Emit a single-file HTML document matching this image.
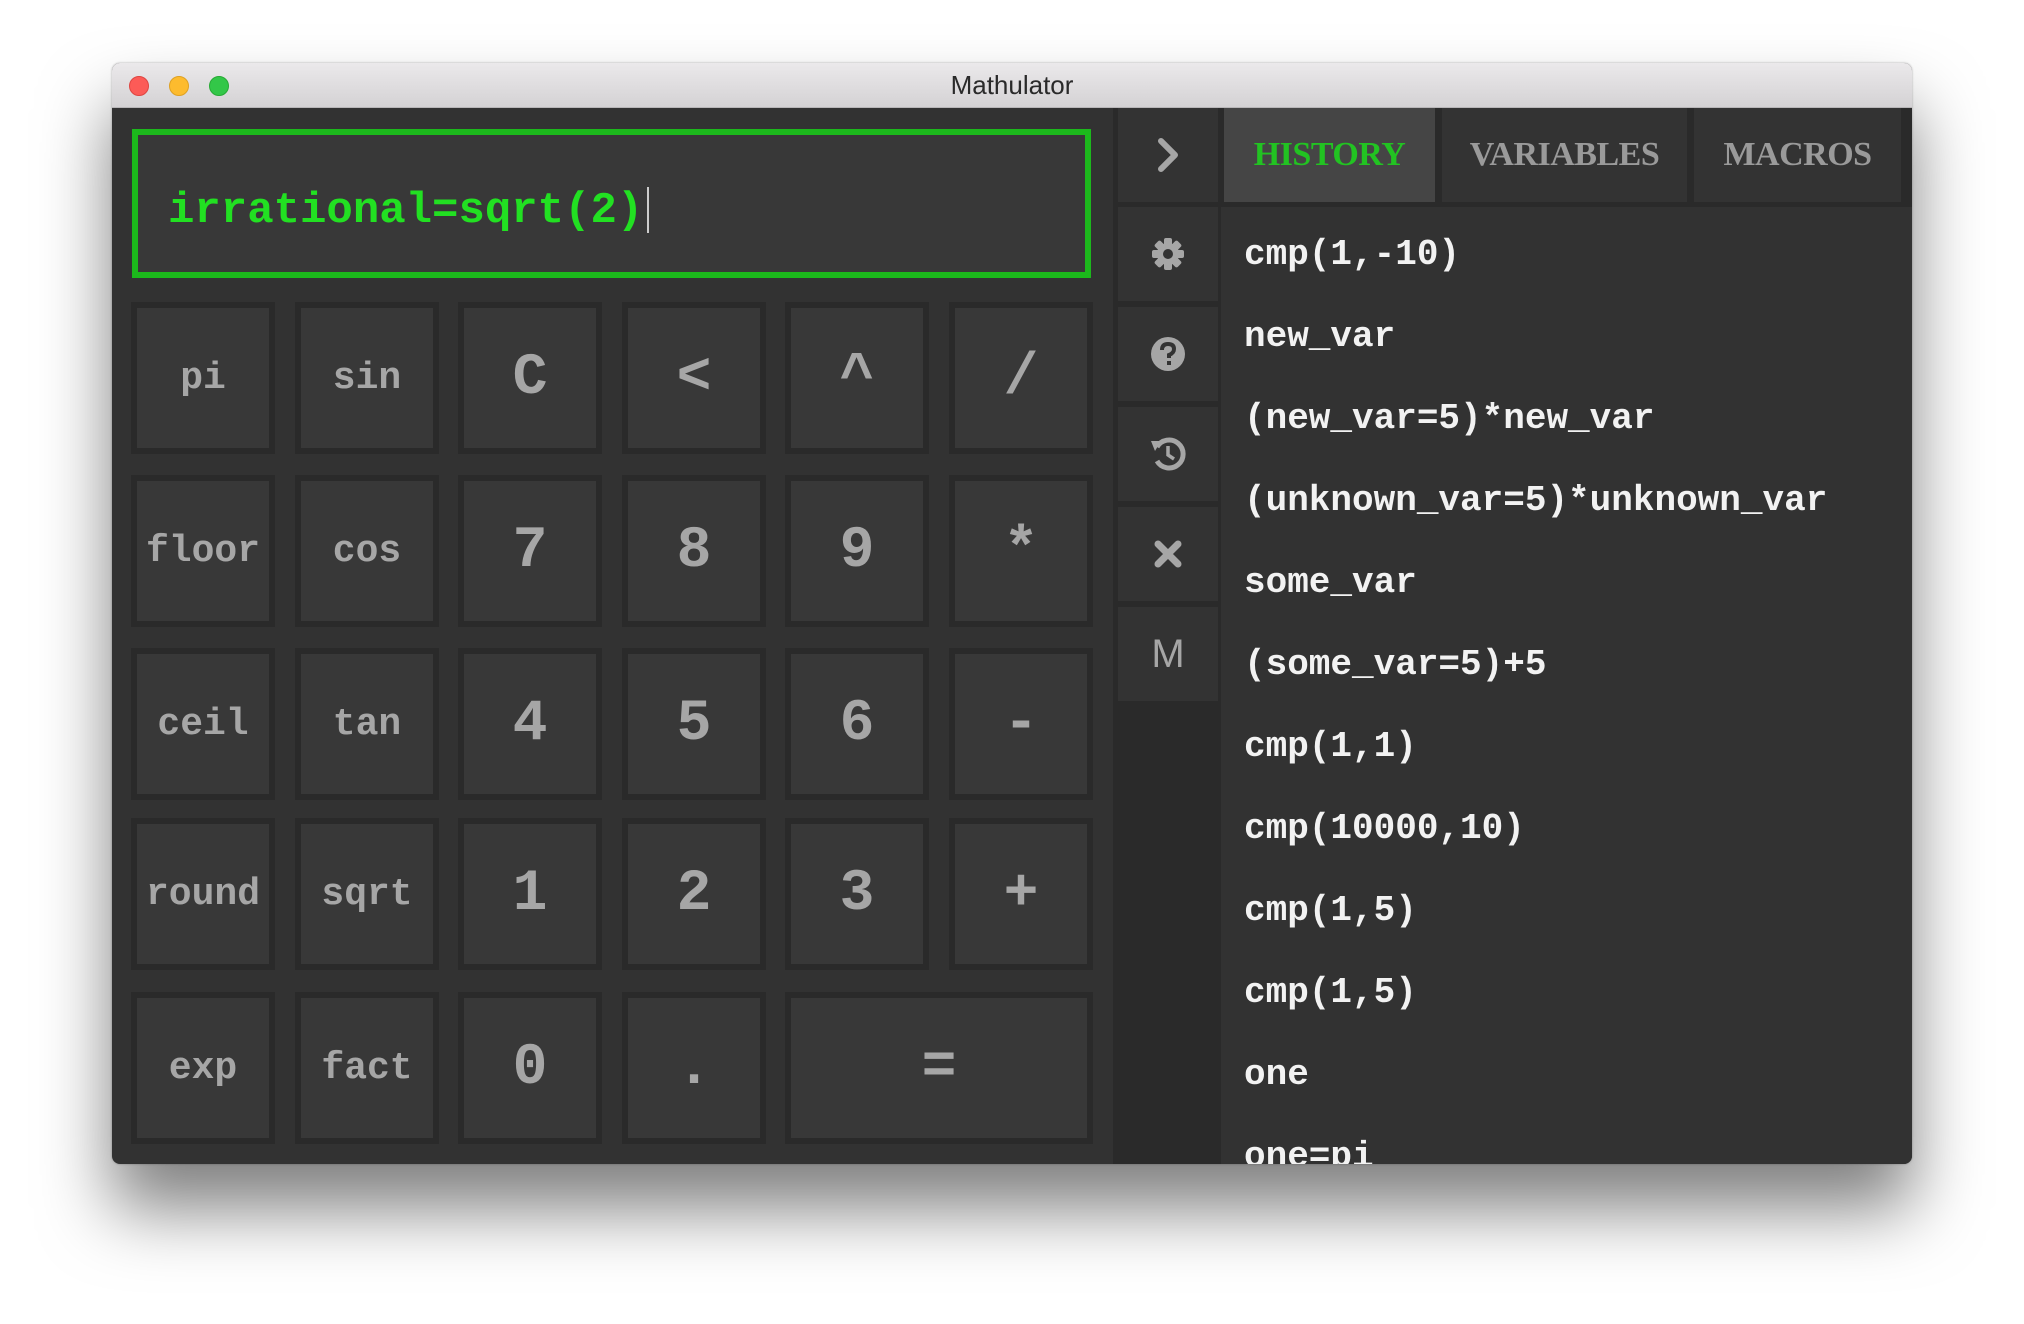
<!DOCTYPE html>
<html><head><meta charset="utf-8"><style>
*{box-sizing:border-box;margin:0;padding:0}
body{width:2024px;height:1324px;background:#fff;position:relative;overflow:hidden;font-family:"Liberation Sans",sans-serif}
.win{position:absolute;left:112px;top:63px;width:1800px;height:1101px;border-radius:8px;background:#323232;box-shadow:0 45px 70px rgba(0,0,0,.5),0 0 2px rgba(0,0,0,.3);overflow:hidden}
.tb{position:absolute;left:0;top:0;width:100%;height:45px;background:linear-gradient(#ebe9eb,#d4d2d4);border-bottom:1px solid #b8b6b8;text-align:center;font-size:26px;line-height:45px;color:#2a2a2a}
.dot{position:absolute;top:13px;width:20px;height:20px;border-radius:50%}
.inp{position:absolute;left:20px;top:66px;width:959px;height:149px;border:6px solid #1cb81c;background:#383838;font:bold 44px "Liberation Mono",monospace;color:#22e022;padding-left:30px;padding-top:8px;line-height:137px}
.cur{display:inline-block;width:2px;height:46px;background:#ccc;vertical-align:middle;margin-left:4px}
.b{position:absolute;width:144px;height:152px;background:#383838;border:6px solid #2a2a2a;color:#a6a6a6;font:bold 38px "Liberation Mono",monospace;display:flex;align-items:center;justify-content:center}
.b.big{font-size:58px}
.side{position:absolute;left:1001px;top:45px;width:108px;height:1056px;background:#2a2a2a}
.tile{position:absolute;left:5px;width:100px;height:94px;background:#333;display:flex;align-items:center;justify-content:center;color:#a6a6a6}
.panel{position:absolute;left:1109px;top:45px;width:691px;height:1056px;background:#323232;overflow:hidden}
.tabbar{position:absolute;left:0;top:0;width:100%;height:99px;background:#2a2a2a}
.tab{position:absolute;top:0;height:94px;background:#333;font:bold 34px "Liberation Serif",serif;color:#9a9a9a;display:flex;align-items:center;justify-content:center;letter-spacing:-0.5px}
.h{position:absolute;left:23px;font:bold 36px "Liberation Mono",monospace;color:#f2f2f2;white-space:pre}
</style></head><body>
<div class="win">
<div class="tb">Mathulator
<div class="dot" style="left:17px;background:#fc5b57;border:1px solid #de4541"></div>
<div class="dot" style="left:57px;background:#fdbb2e;border:1px solid #dea123"></div>
<div class="dot" style="left:97px;background:#33c748;border:1px solid #27aa35"></div>
</div>
<div class="inp">irrational=sqrt(2)<span class="cur"></span></div>

<div class="b" style="left:19px;top:239px">pi</div>
<div class="b" style="left:183px;top:239px">sin</div>
<div class="b big" style="left:346px;top:239px">C</div>
<div class="b big" style="left:510px;top:239px">&lt;</div>
<div class="b big" style="left:673px;top:239px">^</div>
<div class="b big" style="left:837px;top:239px">/</div>

<div class="b" style="left:19px;top:412px">floor</div>
<div class="b" style="left:183px;top:412px">cos</div>
<div class="b big" style="left:346px;top:412px">7</div>
<div class="b big" style="left:510px;top:412px">8</div>
<div class="b big" style="left:673px;top:412px">9</div>
<div class="b big" style="left:837px;top:412px">*</div>

<div class="b" style="left:19px;top:585px">ceil</div>
<div class="b" style="left:183px;top:585px">tan</div>
<div class="b big" style="left:346px;top:585px">4</div>
<div class="b big" style="left:510px;top:585px">5</div>
<div class="b big" style="left:673px;top:585px">6</div>
<div class="b big" style="left:837px;top:585px">-</div>

<div class="b" style="left:19px;top:755px">round</div>
<div class="b" style="left:183px;top:755px">sqrt</div>
<div class="b big" style="left:346px;top:755px">1</div>
<div class="b big" style="left:510px;top:755px">2</div>
<div class="b big" style="left:673px;top:755px">3</div>
<div class="b big" style="left:837px;top:755px">+</div>

<div class="b" style="left:19px;top:929px">exp</div>
<div class="b" style="left:183px;top:929px">fact</div>
<div class="b big" style="left:346px;top:929px">0</div>
<div class="b big" style="left:510px;top:929px">.</div>
<div class="b big" style="left:673px;top:929px;width:308px">=</div>

<div class="side">
<div class="tile" style="top:0"><svg width="30" height="40" viewBox="0 0 30 40"><path d="M8 6 L22 20 L8 34" fill="none" stroke="#a6a6a6" stroke-width="6" stroke-linecap="round" stroke-linejoin="round"/></svg></div>
<div class="tile" style="top:99px"><svg width="36" height="36" viewBox="0 0 36 36"><g fill="#a6a6a6"><circle cx="18" cy="18" r="11"/><rect x="14" y="2" width="8" height="32" rx="2"/><rect x="14" y="2" width="8" height="32" rx="2" transform="rotate(45 18 18)"/><rect x="14" y="2" width="8" height="32" rx="2" transform="rotate(90 18 18)"/><rect x="14" y="2" width="8" height="32" rx="2" transform="rotate(135 18 18)"/></g><circle cx="18" cy="18" r="5" fill="#333"/></svg></div>
<div class="tile" style="top:199px"><svg width="36" height="36" viewBox="0 0 36 36"><circle cx="18" cy="18" r="17" fill="#a6a6a6"/><path d="M12 14 Q12 8 18 8 Q24 8 24 13 Q24 17 19 19 L19 22" fill="none" stroke="#333" stroke-width="4"/><rect x="17" y="25" width="4" height="4" fill="#333"/></svg></div>
<div class="tile" style="top:299px"><svg width="38" height="38" viewBox="0 0 38 38"><path d="M8 12 A14 14 0 1 1 8 26" fill="none" stroke="#a6a6a6" stroke-width="5"/><path d="M2 6 L12 6 L6 16 Z" fill="#a6a6a6"/><path d="M19 11 L19 20 L25 24" fill="none" stroke="#a6a6a6" stroke-width="3.5"/></svg></div>
<div class="tile" style="top:399px"><svg width="30" height="30" viewBox="0 0 30 30"><path d="M5 5 L25 25 M25 5 L5 25" stroke="#a6a6a6" stroke-width="7" stroke-linecap="round"/></svg></div>
<div class="tile" style="top:499px;font:40px 'Liberation Sans',sans-serif">M</div>
</div>

<div class="panel">
<div class="tabbar">
<div class="tab" style="left:3px;width:211px;background:#454545;color:#22c322">HISTORY</div>
<div class="tab" style="left:221px;width:245px">VARIABLES</div>
<div class="tab" style="left:473px;width:207px">MACROS</div>
</div>
<div class="h" style="top:126px">cmp(1,-10)</div>
<div class="h" style="top:208px">new_var</div>
<div class="h" style="top:290px">(new_var=5)*new_var</div>
<div class="h" style="top:372px">(unknown_var=5)*unknown_var</div>
<div class="h" style="top:454px">some_var</div>
<div class="h" style="top:536px">(some_var=5)+5</div>
<div class="h" style="top:618px">cmp(1,1)</div>
<div class="h" style="top:700px">cmp(10000,10)</div>
<div class="h" style="top:782px">cmp(1,5)</div>
<div class="h" style="top:864px">cmp(1,5)</div>
<div class="h" style="top:946px">one</div>
<div class="h" style="top:1028px">one=pi</div>
</div>
</div>
</body></html>
